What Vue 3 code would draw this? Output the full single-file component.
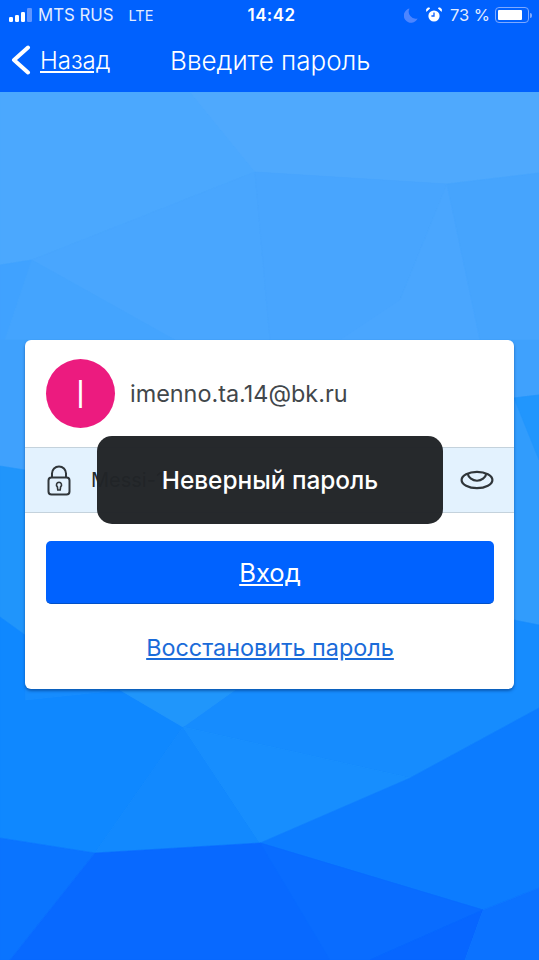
<script setup>
import { ref } from 'vue';

const email = 'imenno.ta.14@bk.ru';
const password = ref('Messi-1');

// low-poly backdrop, top to bottom
const polygons = [
  { points: '0,92 190,92 255,172 32,260 0,265', fill: '#4ba8fe' },
  { points: '190,92 539,92 539,173 447,184 255,172', fill: '#4fa9fd' },
  { points: '32,260 255,172 270,340 175,340', fill: '#49a6fe' },
  { points: '255,172 447,184 400,300 340,340 270,340', fill: '#48a5fe' },
  { points: '447,184 400,300 340,340 480,340', fill: '#4aa6fe' },
  { points: '447,184 539,173 539,340 480,340', fill: '#46a4fd' },
  { points: '0,265 32,260 5,340 0,340', fill: '#40a2ff' },
  { points: '32,260 175,340 5,340', fill: '#44a4fe' },
  { points: '0,340 539,340 539,395 514,398 25,470 0,466', fill: '#3fa1fd' },
  { points: '25,470 514,398 539,395 539,625 514,620 25,635', fill: '#319cfc' },
  { points: '0,466 25,470 25,635 0,617', fill: '#2095fb' },
  { points: '514,398 539,395 539,460', fill: '#2196fd' },
  { points: '0,617 25,635 25,700 120,690 183,727 95,853 0,838', fill: '#0f88ff' },
  { points: '25,635 514,620 539,625 539,708 410,778 183,727 235,690 120,690 25,700', fill: '#168cfe' },
  { points: '120,690 235,690 183,727', fill: '#2096fb' },
  { points: '183,727 260,843 95,853', fill: '#1289fe' },
  { points: '183,727 410,778 260,843', fill: '#178efe' },
  { points: '410,778 539,708 539,888 483,910 260,843', fill: '#0c7cff' },
  { points: '0,838 95,853 10,960 0,960', fill: '#0a74ff' },
  { points: '95,853 260,843 483,910 370,960 10,960', fill: '#0869ff' },
  { points: '260,843 483,910 370,960 330,960', fill: '#096cff' },
  { points: '483,910 370,960 465,960', fill: '#0766ff' },
  { points: '483,910 539,888 539,960 465,960', fill: '#0b72ff' },
];
</script>

<template>
  <div class="screen">
    <svg class="backdrop" viewBox="0 0 539 960" width="539" height="960">
      <rect width="539" height="960" fill="#45a4fe" />
      <polygon
        v-for="poly in polygons"
        :key="poly.points"
        :points="poly.points"
        :fill="poly.fill"
        :stroke="poly.fill"
        stroke-width="0.6"
      />
    </svg>

    <header class="top-bar">
      <div class="status-bar">
        <div class="status-left">
          <svg class="signal" width="24" height="14" viewBox="0 0 24 14">
            <rect x="0" y="9" width="4" height="5" rx="1.2" fill="#fff" />
            <rect x="6" y="7" width="4" height="7" rx="1.2" fill="#fff" />
            <rect x="12" y="4" width="4" height="10" rx="1.2" fill="#fff" />
            <rect x="18" y="0" width="5" height="14" rx="1.2" fill="#5f95ff" />
          </svg>
          <span class="carrier">MTS RUS</span>
          <span class="network">LTE</span>
        </div>
        <span class="clock">14:42</span>
        <div class="status-right">
          <svg class="moon" width="14" height="15" viewBox="0 0 14 15">
            <path d="M5.5 0.5 A7.2 7.2 0 1 0 13.6 10.4 A7 7 0 0 1 5.5 0.5 Z" fill="#4c85ff" />
          </svg>
          <svg class="alarm" width="16" height="16" viewBox="0 0 16 16">
            <circle cx="8" cy="9" r="5.6" fill="#fff" />
            <path d="M8 5.6 V9 H5.4" fill="none" stroke="#0a5fff" stroke-width="1.3" />
            <path d="M0.6 4.4 L4 1.2 A2.4 2.4 0 0 0 0.6 4.4 Z M15.4 4.4 L12 1.2 A2.4 2.4 0 0 1 15.4 4.4 Z" fill="#fff" stroke="#fff" stroke-width="0.6" />
          </svg>
          <span class="percent">73 %</span>
          <div class="battery">
            <div class="battery-level"></div>
          </div>
          <div class="battery-cap"></div>
        </div>
      </div>
      <nav class="nav-bar">
        <a class="back">
          <svg width="20" height="30" viewBox="0 0 20 30">
            <path d="M17 2.5 L3 15 L17 27.5" fill="none" stroke="#fff" stroke-width="4" stroke-linecap="round" stroke-linejoin="round" />
          </svg>
          <span class="back-label">Назад</span>
        </a>
        <h1 class="title">Введите пароль</h1>
      </nav>
    </header>

    <main class="content">
      <section class="card">
        <div class="account">
          <div class="avatar">I</div>
          <span class="email">{{ email }}</span>
        </div>
        <div class="password-row">
          <svg class="lock" width="24" height="31" viewBox="0 0 24 31">
            <path d="M5 13 V8.5 A7 7 0 0 1 19 8.5 V13" fill="none" stroke="#30363a" stroke-width="2" />
            <rect x="1.5" y="12.5" width="21" height="17" rx="3" fill="none" stroke="#30363a" stroke-width="2" />
            <path d="M12 17.2 A2.6 2.6 0 0 1 13.6 21.8 L13.2 25 H10.8 L10.4 21.8 A2.6 2.6 0 0 1 12 17.2 Z" fill="none" stroke="#30363a" stroke-width="1.6" />
          </svg>
          <input v-model="password" class="password-input" type="text" />
          <svg class="eye" width="34" height="22" viewBox="0 0 34 22">
            <ellipse cx="17" cy="11" rx="15.4" ry="8.2" fill="none" stroke="#30363a" stroke-width="2.2" />
            <path d="M7.6 4.4 A9.6 9.2 0 0 0 26.4 4.4" fill="none" stroke="#30363a" stroke-width="2.2" />
          </svg>
        </div>
        <div class="actions">
          <button class="submit" type="button">Вход</button>
          <a class="restore">Восстановить пароль</a>
        </div>
      </section>
    </main>

    <div class="toast">Неверный пароль</div>
  </div>
</template>

<style>
html,
body {
  margin: 0;
  background: #45a4fe;
}
</style>

<style scoped>
.screen {
  position: relative;
  width: 539px;
  height: 960px;
  overflow: hidden;
  display: flex;
  flex-direction: column;
  font-family: Inter, "Noto Sans", sans-serif;
}

.backdrop {
  position: absolute;
  top: 0;
  left: 0;
}

.top-bar {
  position: relative;
  height: 92px;
  background: #0061fe;
  color: #fff;
}

.status-bar {
  position: relative;
  height: 30px;
  display: flex;
  align-items: center;
  justify-content: space-between;
  padding: 0 7px 0 9px;
  font-size: 16px;
}

.status-left,
.status-right {
  display: flex;
  align-items: center;
}

.status-left {
  width: 180px;
}

.signal {
  margin-right: 5px;
}

.carrier {
  font-size: 16.8px;
  color: #e3ecff;
}

.network {
  margin-left: 15px;
  font-size: 14.5px;
  color: #e3ecff;
}

.clock {
  font-size: 17px;
  font-weight: 600;
  letter-spacing: 0.4px;
}

.status-right {
  width: 178px;
  justify-content: flex-end;
}

.moon {
  margin-right: 8px;
}

.alarm {
  margin-right: 8px;
}

.percent {
  margin-right: 5px;
  font-size: 16.5px;
  color: #e3ecff;
}

.battery {
  width: 34px;
  height: 16px;
  box-sizing: border-box;
  padding: 2px;
  border: 1px solid #7ea9ff;
  border-radius: 4px;
}

.battery-level {
  width: 24px;
  height: 100%;
  background: #fff;
  border-radius: 1px;
}

.battery-cap {
  width: 2px;
  height: 5px;
  margin-left: 1px;
  background: #7ea9ff;
  border-radius: 0 2px 2px 0;
}

.nav-bar {
  display: flex;
  align-items: center;
  height: 60px;
  padding-left: 11px;
}

.back {
  display: flex;
  align-items: center;
  width: 159px;
}

.back-label {
  margin-left: 9px;
  font-size: 24px;
  font-weight: 300;
  text-decoration: underline;
  text-decoration-thickness: 2px;
  text-underline-offset: 2px;
}

.title {
  margin: 0;
  font-size: 26px;
  font-weight: 300;
}

.content {
  position: relative;
  flex: 1;
  padding: 248px 25px 0;
}

.card {
  height: 349px;
  background: #fff;
  border-radius: 6px;
  box-shadow: 0 2px 3px rgba(0, 50, 120, 0.55);
  overflow: hidden;
}

.account {
  height: 107px;
  display: flex;
  align-items: center;
  padding-left: 21px;
  box-sizing: border-box;
}

.avatar {
  width: 69px;
  height: 69px;
  flex: none;
  border-radius: 50%;
  background: #ec1b7f;
  color: #fff;
  display: flex;
  align-items: center;
  justify-content: center;
  font-size: 38px;
  font-weight: 300;
}

.email {
  margin-left: 15px;
  font-size: 23.4px;
  font-weight: 400;
  color: #42474b;
}

.password-row {
  height: 66px;
  box-sizing: border-box;
  display: flex;
  align-items: center;
  padding: 0 20px 0 22px;
  background: #e3f2fe;
  border-top: 1px solid #c4d2dc;
  border-bottom: 1px solid #c4d2dc;
}

.password-input {
  flex: 1;
  min-width: 0;
  margin-left: 20px;
  padding: 0;
  border: none;
  outline: none;
  background: transparent;
  font-family: inherit;
  font-size: 20px;
  color: #26292c;
}

.actions {
  display: flex;
  flex-direction: column;
  align-items: center;
  padding: 28px 20px 0 21px;
}

.submit {
  width: 100%;
  height: 63px;
  padding: 0;
  border: none;
  border-bottom: 1px solid #0050c8;
  border-radius: 5px;
  background: #0062ff;
  color: #fff;
  font-family: inherit;
  font-size: 25.6px;
  font-weight: 400;
  text-decoration: underline;
  text-decoration-thickness: 2px;
  text-underline-offset: 2px;
}

.restore {
  margin-top: 29px;
  font-size: 23.4px;
  color: #1a6bd9;
  text-decoration: underline;
  text-underline-offset: 2px;
}

.toast {
  position: absolute;
  top: 436px;
  left: 97px;
  width: 346px;
  height: 88px;
  display: flex;
  align-items: center;
  justify-content: center;
  background: rgba(33, 36, 39, 0.975);
  border-radius: 15px;
  color: #fff;
  font-size: 24.4px;
  font-weight: 500;
}
</style>
